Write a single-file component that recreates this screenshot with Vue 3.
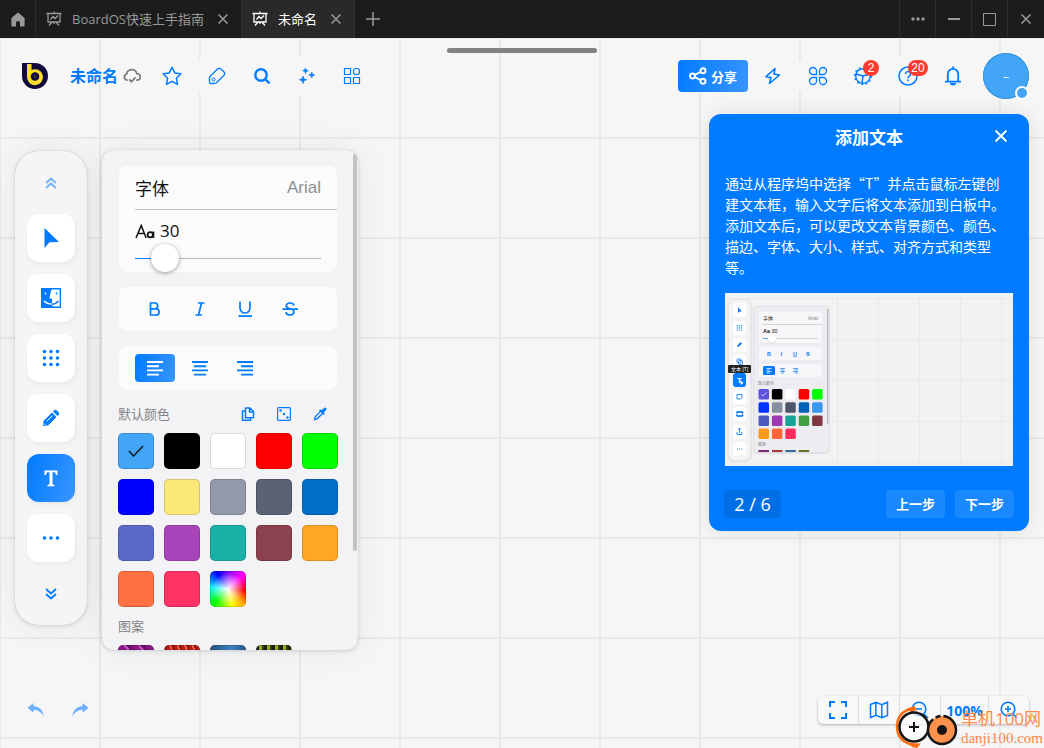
<script setup>
import { ref, computed } from 'vue'

const fontSize = ref(30)
const minSize = 12
const maxSize = 190
const fill = computed(() => ({
  '--fill': ((fontSize.value - minSize) / (maxSize - minSize)) * 100 + '%'
}))

const swatches = [
  '#42a5f5', '#000000', '#ffffff', '#ff0000', '#00ff00',
  '#0000ff', '#fae878', '#9299a9', '#5a6275', '#006dc6',
  '#5a6ac8', '#a845bb', '#1ab0a7', '#8c424e', '#ffa726',
  '#ff7043', '#ff3366'
]
const selected = ref(0)

const miniSwatches = [
  '#5e52dc', '#000', '#fff', '#f00', '#0f0',
  '#0033ff', '#868ea0', '#4d566b', '#0062b8', '#3b97ee',
  '#4c5bbf', '#9c38b2', '#18a598', '#43a047', '#7f3744',
  '#ff9a1c', '#ff6739', '#ff2c5c'
]
const miniY = [10, 28, 45, 62, 97, 114, 132, 149]
</script>

<template>
  <div class="app" lang="zh-CN">
    <header class="titlebar">
      <button class="home" aria-label="主页">
        <svg width="14" height="15" viewBox="0 0 14 15"><path fill="#999" d="M7 .5 13.600 6v7.500a1 1 0 0 1-1 1H9v-3.600a2 2 0 0 0-4 0v3.600H1.400a1 1 0 0 1-1-1V6z" /></svg>
      </button>
      <div class="tab">
        <svg class="board-icon" width="16" height="16" viewBox="0 0 16 16"><path d="M.5 2.500h15M2 2.500v8.500h12V2.500M8 .5v2M6 11l-3 3.500M10 11l3 3.500M8 11v2M4.500 8.500 7 5.500l2 2 3-3" /></svg>
        <span>BoardOS快速上手指南</span>
        <button class="tab-close" aria-label="关闭标签"><svg width="10" height="10" viewBox="0 0 10 10"><path d="m.5.5 9 9m0-9-9 9" /></svg></button>
      </div>
      <div class="tab active">
        <svg class="board-icon" width="16" height="16" viewBox="0 0 16 16"><path d="M.5 2.500h15M2 2.500v8.500h12V2.500M8 .5v2M6 11l-3 3.500M10 11l3 3.500M8 11v2M4.500 8.500 7 5.500l2 2 3-3" /></svg>
        <span>未命名</span>
        <button class="tab-close" aria-label="关闭标签"><svg width="10" height="10" viewBox="0 0 10 10"><path d="m.5.5 9 9m0-9-9 9" /></svg></button>
      </div>
      <button class="new-tab" aria-label="新建标签"><svg width="14" height="14" viewBox="0 0 14 14"><path d="M7 0v14M0 7h14" /></svg></button>
      <div class="win">
        <button aria-label="更多"><svg width="14" height="4" viewBox="0 0 14 4"><g fill="#999"><circle cx="2" cy="2" r="1.700" /><circle cx="7" cy="2" r="1.700" /><circle cx="12" cy="2" r="1.700" /></g></svg></button>
        <button aria-label="最小化"><svg width="12" height="2" viewBox="0 0 12 2"><path fill="#999" d="M0 0h12v2H0z" /></svg></button>
        <button aria-label="最大化"><svg width="13" height="13" viewBox="0 0 13 13"><path fill="none" stroke="#999" d="M.5.5h12v12H.5z" /></svg></button>
        <button aria-label="关闭"><svg width="10" height="10" viewBox="0 0 10 10"><path fill="none" stroke="#999" stroke-width="1.500" d="m.5.500 9 9m0-9-9 9" /></svg></button>
      </div>
    </header>

    <main class="board">
      <div class="handle"></div>

      <div class="toolbar">
        <svg class="logo" width="26" height="26" viewBox="0 0 26 26">
          <path fill="#120a3c" d="M0 0h13a13 13 0 1 1-13 13z" />
          <path fill="#ffdd2d" d="M5 1h4.500v6A8 8 0 1 1 5 14z" />
          <circle cx="13" cy="13.500" r="4.300" fill="#120a3c" /><circle cx="13" cy="13.500" r="1.200" fill="#ffdd2d" opacity=".25" />
        </svg>
        <h1>未命名</h1>
        <svg class="cloud" width="18" height="16" viewBox="0 0 18 16"><path fill="none" stroke="#7c7c7c" stroke-width="1.800" d="M4.700 12.200H4A3.200 3.200 0 0 1 3.600 6 5.200 5.200 0 0 1 13.800 5.600a3.300 3.300 0 0 1 .4 6.600h-1M6.200 11.300l2.300 2.300 4-4.300" /></svg>
        <nav class="tools">
          <button aria-label="收藏"><svg width="20" height="20" viewBox="0 0 20 20"><path stroke-width="1.500" stroke-linejoin="round" d="m10 1.200 2.700 5.700 6.200.9-4.500 4.400 1.100 6.200-5.500-3-5.500 3 1.100-6.200L1.100 7.800l6.200-.9z" /></svg></button>
          <button aria-label="标签"><svg width="18" height="18" viewBox="0 0 18 18"><path stroke-width="1.300" stroke-linejoin="round" d="M1.500 10 9.500 2Q11 .8 12.700 1.800l3.300 3.200q1.300 1.500.2 3L8.500 15.800Q7.500 16.500 6 16.500H3Q1.500 16.500 1.500 15z" /><circle cx="5.500" cy="12.500" r="1.500" /></svg></button>
          <button aria-label="搜索"><svg width="18" height="18" viewBox="0 0 18 18"><circle cx="8" cy="8" r="5.700" stroke-width="2.400" /><path stroke-width="2.400" d="m12 12 4.500 4.300" /></svg></button>
          <button aria-label="智能工具"><svg width="16" height="16" viewBox="0 0 16 16"><path fill="#007bff" stroke="#007bff" stroke-width=".6" stroke-linejoin="round" d="M6.500 0 7.300 2 9.300 2.800 7.300 3.600 6.500 5.600 5.700 3.600 3.700 2.800 5.700 2zM12.800 4 13.600 6.200 15.800 7 13.600 7.800 12.800 10 12 7.800 9.800 7 12 6.200zM4 8 5 10.800 7.800 11.800 5 12.800 4 15.600 3 12.800.2 11.800 3 10.800z" /></svg></button>
          <button aria-label="组件"><svg width="18" height="18" viewBox="0 0 18 18"><path d="M1.500 1.500h6v6h-6zM1.500 10.500h6v6h-6zM10.500 10.500h6v6h-6z" stroke-width="1.200" /><rect x="10.500" y="1.500" width="6" height="6" rx="2.500" stroke-width="1.200" /></svg></button>
        </nav>
        <button class="share"><svg width="18" height="18" viewBox="0 0 18 18"><g fill="none" stroke="#fff" stroke-width="1.900"><circle cx="3.500" cy="9" r="2.500" /><circle cx="14" cy="3.700" r="2.500" /><circle cx="14" cy="14.300" r="2.500" /><path d="M5.800 7.900 11.700 4.900M5.800 10.100l5.900 3" /></g></svg>分享</button>
        <nav class="tools">
          <button aria-label="快捷"><svg width="18" height="18" viewBox="0 0 18 18"><path stroke-width="1.600" stroke-linejoin="round" d="M11 1.500 2 9.600l5 1L5.500 16.500 15.500 8 10 7z" /></svg></button>
          <button aria-label="应用"><svg width="20" height="20" viewBox="0 0 20 20"><path stroke-width="1.300" d="M8.500 8.500H5A3.500 3.500 0 1 1 8.500 5zM11.500 8.500H15A3.500 3.500 0 1 0 11.500 5zM8.500 11.500H5A3.500 3.500 0 1 0 8.500 15zM11.500 11.500H15A3.500 3.500 0 1 1 11.500 15z" /></svg></button>
          <button aria-label="设置"><svg width="20" height="20" viewBox="0 0 20 20"><circle cx="10" cy="10" r="7.300" stroke-width="1.500" /><circle cx="10" cy="10" r="8.500" stroke-width="1.500" stroke-dasharray="1.600 2.850" /><path stroke-width="1.500" d="m10 10-7-2M10 10l7-2M10 10l-1 7" /></svg><b class="badge">2</b></button>
          <button aria-label="帮助"><svg width="20" height="20" viewBox="0 0 20 20"><circle cx="10" cy="10" r="9" stroke-width="1.500" /><path stroke-width="1.500" d="M7.500 8a2.500 2.500 0 1 1 3.800 2.100Q10 10.900 10 12.200M10 13.500v1.700" /></svg><b class="badge wide">20</b></button>
          <button aria-label="通知"><svg width="18" height="20" viewBox="0 0 18 20"><path stroke-width="1.800" d="M3.800 15.500V8a5.200 5.200 0 0 1 10.400 0v7.500M1 15.700h16M9 .5V3" /><path fill="#007bff" stroke="none" d="M6 17h6a3 2.500 0 0 1-6 0z" /></svg></button>
        </nav>
        <button class="avatar" aria-label="账户">–<i></i></button>
      </div>

      <div class="workspace">
        <aside class="dock">
          <button class="scroll dim" aria-label="向上"><svg width="12" height="12" viewBox="0 0 12 12"><path d="m1 6 5-4.500L11 6M1 11l5-4.500 5 4.500" /></svg></button>
          <div class="dock-items">
            <button aria-label="选择"><svg width="16" height="22" viewBox="0 0 16 22"><path fill="#007bff" d="M1.500 1v20l5-5.700L16 15z" /></svg></button>
            <button aria-label="访达"><svg width="20" height="20" viewBox="0 0 20 20"><path fill="#fff" stroke="#007bff" stroke-width="1.400" d="M.7.700h18.600v18.600H.7z" /><path fill="#007bff" d="M0 0h11Q9 5 8.500 10.500H11Q10.800 16 12 20H0z" /><path fill="none" stroke="#fff" stroke-width="1.300" d="M4.500 4.500v2M3 13q3 3 8 3.200" /><path fill="none" stroke="#007bff" stroke-width="1.300" d="M15.500 4.500v2M11 16.200q4-.2 6.500-3.200" /></svg></button>
            <button aria-label="网格"><svg width="18" height="18" viewBox="0 0 18 18"><g fill="#007bff"><template v-for="r in 3" :key="r"><circle v-for="c in 3" :key="c" :cx="c * 6.500 - 4" :cy="r * 6.500 - 4" r="1.800" /></template></g></svg></button>
            <button aria-label="画笔"><svg width="18" height="18" viewBox="0 0 18 18"><path fill="#007bff" d="m1 17 .5-5L10 3.500 14.500 8 6 16.500zM11 2.500l1.200-1.200q1.300-1 2.600.1l2 2q1 1.300 0 2.400L15.500 7z" /><path stroke="#fff" d="m4.500 12.500 6-6M2 14.500 3.500 16" /></svg></button>
            <button class="on" aria-label="文本"><svg width="14" height="17" viewBox="0 0 14 17"><path fill="#fff" d="M.5.500h13V5H12l-.8-2.700H8.500v11.900l2 .8v1.300h-7V15l2-.8V2.300H2.800L2 5H.5z" /></svg></button>
            <button aria-label="更多工具"><svg width="18" height="4" viewBox="0 0 18 4"><g fill="#007bff"><circle cx="2.500" cy="2" r="1.800" /><circle cx="9" cy="2" r="1.800" /><circle cx="15.500" cy="2" r="1.800" /></g></svg></button>
          </div>
          <button class="scroll" aria-label="向下"><svg width="12" height="12" viewBox="0 0 12 12"><path d="m1 1 5 4.500L11 1M1 6l5 4.500L11 6" /></svg></button>
        </aside>

        <section class="panel">
          <div class="card font-card">
            <div class="font-row"><span>字体</span><span class="font-name">Arial</span></div>
            <div class="size-box">
              <label for="size"><svg width="20" height="15" viewBox="0 0 20 15"><path fill="none" stroke="#111" stroke-width="1.500" d="M1 14 6.200 1.500 11.200 14M3 9.500h6.500" /><ellipse cx="15.300" cy="10.800" rx="2.700" ry="2.600" fill="none" stroke="#111" stroke-width="1.800" /><path stroke="#111" stroke-width="1.800" d="M18.400 7.500V14" /></svg>{{ fontSize }}</label>
              <input id="size" v-model.number="fontSize" type="range" :min="minSize" :max="maxSize" :style="fill" />
            </div>
          </div>
          <div class="card row">
            <button aria-label="粗体"><svg width="20" height="20" viewBox="0 0 20 20"><path stroke-width="1.700" d="M5.500 4h5a3 3 0 0 1 0 5.800h-5M5.500 3.200v12.800h5.500a3.100 3.100 0 0 0 0-6.200" /></svg></button>
            <button aria-label="斜体"><svg width="20" height="20" viewBox="0 0 20 20"><path stroke-width="1.700" d="M8 4h6.500M5.500 16H12M11.500 4 8.500 16" /></svg></button>
            <button aria-label="下划线"><svg width="20" height="20" viewBox="0 0 20 20"><path stroke-width="1.700" d="M5 2.500V9a5 5 0 0 0 10 0V2.500M3.500 17.200h13.500" /></svg></button>
            <button aria-label="删除线"><svg width="20" height="20" viewBox="0 0 20 20"><path stroke-width="1.700" d="M14 6.500Q13.500 4 10 4 6.500 4 6.200 6.800 6.200 8.800 10 9.800 14 10.800 14 13.200 13.500 16 10 16 6.500 16 5.800 13.200M2.500 10.200h15.500" /></svg></button>
          </div>
          <div class="card row">
            <button class="on" aria-label="左对齐"><svg width="16" height="16" viewBox="0 0 16 16"><path stroke-width="1.900" d="M0 2h16M0 6.200h12M0 10.400h16M0 14.600h12" /></svg></button>
            <button aria-label="居中"><svg width="16" height="16" viewBox="0 0 16 16"><path stroke-width="1.900" d="M0 2h16M2 6.200h12M0 10.400h16M2 14.600h12" /></svg></button>
            <button aria-label="右对齐"><svg width="16" height="16" viewBox="0 0 16 16"><path stroke-width="1.900" d="M0 2h16M4 6.200h12M0 10.400h16M4 14.600h12" /></svg></button>
          </div>
          <div class="section-head">
            <h2>默认颜色</h2>
            <button aria-label="复制"><svg width="14" height="14" viewBox="0 0 14 14"><path stroke-width="1.500" stroke-linejoin="round" d="M4.500 1h4.500L12.500 4.500v6.300h-8zM8.500 1v4h4M4.500 4H1.500v9.300H9.500v-2.500" /></svg></button>
            <button aria-label="随机"><svg width="14" height="14" viewBox="0 0 14 14"><rect x=".6" y=".6" width="12.800" height="12.800" rx="1" stroke-width="1.200" /><g fill="#007bff" stroke="none"><circle cx="3.500" cy="3.500" r="1.200" /><circle cx="7" cy="7" r="1.200" /><circle cx="10.500" cy="10.500" r="1.200" /></g></svg></button>
            <button aria-label="吸管"><svg width="14" height="14" viewBox="0 0 14 14"><path stroke-width="1.300" d="M7.500 4.500 2.200 9.800 1.500 12.500 4.200 11.800 9.500 6.500" /><path fill="#007bff" stroke="none" d="M6 3.500l1.200-1.200 1.300 1L11 1q1.200-.9 2.100 0 .9 1 0 2.100L10.800 5.500l1 1.300-1.200 1.200z" /></svg></button>
          </div>
          <div class="swatches">
            <button v-for="(c, i) in swatches" :key="c" class="swatch" :style="{ background: c }" :aria-label="c" @click="selected = i">
              <svg v-if="selected === i" width="16" height="12" viewBox="0 0 16 12"><path fill="none" stroke="#101820" stroke-width="1.500" d="m1 6 4.500 5L15 1" /></svg>
            </button>
            <button class="swatch rainbow" aria-label="自定义颜色"></button>
          </div>
          <h2 class="pattern-title">图案</h2>
          <div class="swatches">
            <button class="swatch p1" aria-label="图案 1"></button>
            <button class="swatch p2" aria-label="图案 2"></button>
            <button class="swatch p3" aria-label="图案 3"></button>
            <button class="swatch p4" aria-label="图案 4"></button>
          </div>
          <div class="thumb"></div>
        </section>

        <article class="tour">
          <div class="tour-head">
            <h2>添加文本</h2>
            <button aria-label="关闭教程"><svg width="14" height="14" viewBox="0 0 14 14"><path stroke="#fff" stroke-width="1.800" d="m1.500 1.500 11 11m0-11-11 11" /></svg></button>
          </div>
          <p>通过从程序坞中选择“T”并点击鼠标左键创建文本框，输入文字后将文本添加到白板中。添加文本后，可以更改文本背景颜色、颜色、描边、字体、大小、样式、对齐方式和类型等。</p>
          <svg class="preview" viewBox="0 0 288 173">
            <path fill="#f2f2f3" d="M0 0h288v173H0z" />
            <path stroke="#e9e9ec" d="M112.500 0v173M153.500 0v173M194.500 0v173M235.500 0v173M276.500 0v173M0 5.500h288M0 46.500h288M0 87.500h288M0 128.500h288M0 169.500h288" />
            <rect x="2" y="6" width="25" height="163" rx="7" fill="#dcdde2" opacity=".6" />
            <rect x="4" y="7" width="21" height="160" rx="6" fill="#f4f4f5" />
            <rect x="28" y="13" width="77" height="148" rx="5" fill="#d7d8de" opacity=".7" />
            <rect x="29" y="14" width="75" height="145" rx="4" fill="#ededf1" />
            <path stroke="#b5b5b9" stroke-width="1.300" d="M102.700 16v115" />
            <rect v-for="y in miniY" :key="y" x="8" :y="y" width="13" height="14" rx="3" fill="#fff" />
            <rect x="8" y="80" width="13" height="14" rx="3" fill="#007bff" />
            <g fill="#147cf5">
              <path d="M13 14v6l1.500-1.500H17z" />
              <g v-for="r in 3" :key="r"><circle v-for="c in 3" :key="c" :cx="10 + c * 2.200" :cy="30.500 + r * 2.200" r=".7" /></g>
              <path d="m12 54 .6-2 3-3 1.400 1.400-3 3z" />
            </g>
            <g fill="none" stroke="#147cf5" stroke-width=".9">
              <rect x="12" y="66" width="4" height="4" rx="1" /><rect x="13.500" y="67.500" width="4" height="4" rx="1" />
              <path d="M12 101.500h5v3L15.500 106H12zM12 118.500h5.500v5H12zM11 119.500h7.500M11 122.500h7.500M12 139v2.500h5V139M14.500 140v-5l-1.500 1.500M14.500 135l1.500 1.500" />
              <path stroke-dasharray="1 1.200" stroke-width="1.200" d="M12 156h6" />
            </g>
            <text x="12" y="90" font-size="8" font-weight="700" fill="#fff">T</text>
            <path fill="#fff" d="m15 87 1 5 1-1 1.500-1z" />
            <rect x="3" y="72" width="23" height="8" rx="1" fill="#222" />
            <text x="6" y="78" font-size="5" fill="#fff">文本 [T]</text>
            <g fill="#f7f7f9">
              <rect x="34" y="19" width="63" height="31" rx="2.500" /><rect x="34" y="54" width="63" height="13" rx="2.500" /><rect x="34" y="71" width="63" height="13" rx="2.500" />
            </g>
            <text x="38" y="27" font-size="5" fill="#222">字体</text>
            <text x="83" y="27" font-size="5" fill="#888">Arial</text>
            <path stroke="#bcbcc0" stroke-width=".6" d="M38 31.500h59M46 45.500h47" />
            <text x="38" y="40" font-size="5.500" fill="#222"><tspan font-weight="700">Aa</tspan> 30</text>
            <path stroke="#007bff" stroke-width=".7" d="M38 45.500h8" />
            <circle cx="47" cy="46" r="4.500" fill="#d9d9dd" /><circle cx="47" cy="45.500" r="4" fill="#fff" />
            <g font-size="5.500" font-weight="700" fill="#147cf5"><text x="42" y="62.500">B</text><text x="55.500" y="62.500" font-style="italic">I</text><text x="68" y="62.500" text-decoration="underline">U</text><text x="81" y="62.500" text-decoration="line-through">S</text></g>
            <rect x="38" y="73" width="12" height="9" rx="1.500" fill="#007bff" />
            <path stroke="#fff" stroke-width=".7" d="M41.500 75.500h5M41.500 77h3.500M41.500 78.500h5M41.500 80h3.500" />
            <path stroke="#147cf5" stroke-width=".7" d="M55 75.500h5M56 77h3M55 78.500h5M56 80h3M68 75.500h5M69.500 77H73M68 78.500h5M69.500 80H73" />
            <text x="33" y="92" font-size="4" fill="#888">默认颜色</text>
            <rect v-for="(c, i) in miniSwatches" :key="i" :x="33.500 + (i % 5) * 13.400" :y="96 + Math.floor(i / 5) * 13.200" width="10.500" height="10.500" rx="1.500" :fill="c" />
            <path fill="none" stroke="#fff" stroke-width=".7" d="m36.500 101.500 1.500 1.500 3.500-3.500" />
            <text x="33" y="153" font-size="4" fill="#888">图案</text>
            <path fill="#7d286f" d="M33.500 157H44v2H33.500z" /><path fill="#a73835" d="M47 157h10.500v2H47z" /><path fill="#356a91" d="M60.300 157h10.500v2H60.300z" /><path fill="#696d26" d="M73.700 157h10.500v2H73.700z" />
          </svg>
          <div class="tour-foot">
            <span class="count">2 / 6</span>
            <button>上一步</button>
            <button>下一步</button>
          </div>
        </article>
      </div>

      <footer class="bottom">
        <button class="history" aria-label="撤销"><svg width="18" height="16" viewBox="0 0 18 16"><path fill="#6cb0ff" d="M.5 5.800 6.500 1v3q9 .5 10.500 11Q13.500 8 6.500 7.800v3z" /></svg></button>
        <button class="history" aria-label="重做"><svg width="18" height="16" viewBox="0 0 18 16"><path fill="#6cb0ff" d="M17.500 5.800 11.500 1v3Q2.500 4.500 1 15 4.500 8 11.500 7.800v3z" /></svg></button>
        <div class="zoom">
          <button aria-label="全屏"><svg width="18" height="18" viewBox="0 0 18 18"><path stroke-width="2" d="M1 6V1h5M12 1h5v5M17 12v5h-5M6 17H1v-5" /></svg></button>
          <button aria-label="地图"><svg width="20" height="18" viewBox="0 0 20 18"><path stroke-width="1.500" d="M1.500 3.500 6.800 1.200l6 2.400 5.700-2.400v13.300l-5.700 2.300-6-2.400-5.300 2.200zM6.800 1.200v13.200M12.800 3.600v13.200" /></svg></button>
          <button aria-label="缩小"><svg width="18" height="18" viewBox="0 0 18 18"><circle cx="8" cy="8" r="6.800" stroke-width="1.600" /><path stroke-width="1.600" d="m13 13 4 4M5 8h6" /></svg></button>
          <button class="percent">100%</button>
          <button aria-label="放大"><svg width="18" height="18" viewBox="0 0 18 18"><circle cx="8" cy="8" r="6.800" stroke-width="1.600" /><path stroke-width="1.600" d="m13 13 4 4M5 8h6M8 5v6" /></svg></button>
        </div>
      </footer>

      <div class="mark">
        <svg width="66" height="42" viewBox="0 0 66 42">
          <path fill="none" stroke="#ff6b10" stroke-width="2.500" d="M20 2.500Q2.500 4 2 20.500 2 36 20 39.500" />
          <path fill="#ff6b10" d="m11 3 8-3 3 4-6 2zM14 37l12 .5-4 4.500-5-1z" />
          <circle cx="19" cy="21" r="14.500" fill="#fff" fill-opacity=".7" stroke="#161616" stroke-width="2.500" />
          <path stroke="#161616" stroke-width="2" d="M19 16v10M14 21h10" />
          <circle cx="47" cy="24" r="14" fill="#ff914d" stroke="#161616" stroke-width="2.500" stroke-dasharray="56 3 5 3 100" />
          <circle cx="47" cy="24" r="5" fill="#161616" />
        </svg>
        <div><strong>单机100网</strong><span>danji100.com</span></div>
      </div>
    </main>
  </div>
</template>

<style>
body { margin: 0; }
</style>

<style scoped>
.app {
  min-height: 100vh;
  display: flex;
  flex-direction: column;
  font-family: "Open Sans", "Noto Sans CJK SC", sans-serif;
  font-size: 13px;
  color: #111;
}
button {
  border: 0;
  padding: 0;
  margin: 0;
  background: none;
  font: inherit;
  color: inherit;
  display: flex;
  align-items: center;
  justify-content: center;
}
h1, h2, p { margin: 0; }
svg { display: block; flex: none; }

.titlebar { display: flex; height: 38px; background: #1c1c1c; color: #999; }
.titlebar path { fill-rule: evenodd; }
.home { width: 36px; border-right: 1px solid #2c2c2c; }
.tab { display: flex; align-items: center; padding: 0 13px 0 10px; border-right: 1px solid #303030; }
.tab span { margin: 0 14px 0 10px; white-space: nowrap; line-height: 20px; }
.tab.active { background: #292929; color: #fff; }
.board-icon path { fill: none; stroke: currentColor; stroke-width: 1.300; }
.tab-close path, .new-tab path { fill: none; stroke: #999; stroke-width: 1.500; }
.new-tab { width: 36px; }
.win { display: flex; margin-left: auto; padding-right: 1px; }
.win button { width: 36px; border-left: 1px solid #2c2c2c; box-sizing: border-box; }

.board {
  position: relative;
  flex: 1;
  display: flex;
  flex-direction: column;
  background-color: #f6f6f6;
  background-image: linear-gradient(#e9e9e9 2px, transparent 2px), linear-gradient(90deg, #e9e9e9 2px, transparent 2px);
  background-size: 100px 100px;
  background-position: -1px -1px;
  overflow: hidden;
}
.handle { position: absolute; top: 10px; left: 50%; width: 150px; height: 5px; margin-left: -75px; border-radius: 3px; background: #838383; }

.toolbar { display: flex; align-items: center; height: 76px; padding: 0 15px 0 22px; }
h1 { margin-left: 22px; font-size: 16px; line-height: 24px; color: #007bff; white-space: nowrap; }
.cloud { margin: 0 11px 0 5px; }
.tools { display: flex; gap: 5px; }
.tools button { position: relative; width: 40px; height: 40px; border-radius: 10px; background: #f6f6f6; }
.tools svg { fill: none; stroke: #007bff; }
.badge { position: absolute; left: 20px; top: 4px; min-width: 16px; height: 16px; border-radius: 8px; background: #ff3b30; color: #fff; font: 12px/16px "Liberation Sans", sans-serif; text-align: center; }
.badge.wide { min-width: 20px; }
.share { width: 70px; height: 32px; gap: 4px; margin: 0 5px 0 auto; border-radius: 4px; background: linear-gradient(105deg, #007bff, #3995ff); color: #fff; font-size: 13px; font-weight: 700; }
.avatar { position: relative; width: 46px; height: 46px; margin-left: 10px; border-radius: 50%; background: #42a5f5; box-shadow: inset 0 0 0 1px #3b93db; color: #fff; font-size: 12px; }
.avatar i { position: absolute; right: 0; bottom: -1px; width: 10px; height: 10px; border: 2px solid #fff; border-radius: 50%; background: #42a5f5; }

.workspace { display: flex; align-items: flex-start; padding: 0 15px; }
.dock { width: 72px; flex: none; margin-top: 37px; border-radius: 24px; background: #f5f5f5; box-shadow: 0 0 1px #a8adb3, 0 1px 4px rgba(60, 70, 90, .16), 0 0 32px rgba(80, 95, 110, .1); }
.scroll { width: 100%; height: 63px; }
.scroll path { fill: none; stroke: #007bff; stroke-width: 1.800; }
.dim { opacity: .55; }
.dock-items { display: flex; flex-direction: column; align-items: center; gap: 12px; }
.dock-items button { width: 48px; height: 48px; border-radius: 12px; background: #fff; box-shadow: 1px 2px 5px rgba(0, 0, 0, .06); }
.dock-items .on { background: linear-gradient(105deg, #007bff, #3995ff); }

.panel { position: relative; flex: none; box-sizing: border-box; width: 256px; height: 500px; margin: 36px 0 0 15px; padding: 16px 20px 0 16px; border-radius: 12px; overflow: hidden; background: #f3f3f6; box-shadow: 0 0 1px #a8adb3, 0 1px 4px rgba(60, 70, 90, .16), 0 0 32px rgba(80, 95, 110, .1); }
.thumb { position: absolute; top: 4px; right: 1px; width: 4px; height: 397px; border-radius: 2px; background: #c2c2c2; }
.card { margin: 0 1px 15px; border-radius: 8px; background: #fbfbfb; }
.font-card { height: 106px; }
.font-row { display: flex; justify-content: space-between; align-items: center; height: 43px; margin-left: 16px; padding-right: 16px; border-bottom: 1px solid #c4c4c4; font-size: 17px; }
.font-name { font: 17px/20px "Liberation Sans", sans-serif; color: #8f8f8f; }
.size-box { padding: 10px 16px 0; }
.size-box label { display: flex; align-items: center; gap: 5px; height: 24px; font-size: 17px; line-height: 22px; padding-bottom: 2px; box-sizing: border-box; }
.size-box input { -webkit-appearance: none; appearance: none; display: block; width: 100%; height: 28px; margin: 0; background: linear-gradient(90deg, #007bff var(--fill), #b9b9b9 var(--fill)) center / 100% 1px no-repeat; }
.size-box input::-webkit-slider-thumb { -webkit-appearance: none; width: 28px; height: 28px; border-radius: 50%; background: #fff; box-shadow: 0 1px 4px rgba(0, 0, 0, .38); }
.row { display: flex; align-items: center; gap: 5px; height: 44px; padding-left: 16px; }
.row button { width: 40px; height: 28px; border-radius: 4px; }
.row svg { fill: none; stroke: #007bff; }
.row .on { background: linear-gradient(105deg, #007bff, #3995ff); }
.row .on svg { stroke: #fff; }
.panel h2 { font-size: 13px; font-weight: 400; line-height: 18px; color: #858588; }
.section-head { display: flex; align-items: center; height: 18px; margin-bottom: 10px; }
.section-head h2 { margin-right: auto; }
.section-head button { width: 36px; height: 18px; }
.section-head svg { fill: none; stroke: #007bff; }
.swatches { display: grid; grid-template-columns: repeat(5, 36px); gap: 10px; }
.swatch { height: 36px; border-radius: 5px; box-shadow: inset 0 0 0 1px rgba(0, 0, 0, .15); }
.rainbow { background: radial-gradient(circle, #fff, rgba(255, 255, 255, 0) 65%), conic-gradient(#8000ff, #f0f 45deg, #f00 95deg, #ffb000 135deg, #ff0 165deg, #0f0 225deg, #0ff 275deg, #00f 325deg, #8000ff); }
.section-head + .swatches { margin-bottom: 10px; }
.pattern-title { margin-bottom: 10px; }
.p1 { background: repeating-linear-gradient(50deg, #8b1787 0 5px, #b85ab5 5px 7px, #6d116b 7px 11px); }
.p2 { background: repeating-linear-gradient(70deg, #b81d18 0 3px, #f05a45 3px 5px, #8d1712 5px 7px); }
.p3 { background: linear-gradient(90deg, #234f78, #3c80c4 60%, #28567f); }
.p4 { background: repeating-linear-gradient(90deg, #1c2000 0 3px, #9ba61c 3px 6px, #333908 6px 8px); }

.tour { flex: none; box-sizing: border-box; width: 320px; margin-left: auto; padding: 0 16px 13px; border-radius: 12px; background: #007bff; color: #fff; box-shadow: 0 0 20px rgba(0, 0, 0, .1); font-family: "Noto Sans CJK SC", sans-serif; }
.tour-head { position: relative; display: flex; align-items: center; justify-content: center; height: 45px; margin-bottom: 14px; }
.tour-head h2 { font-size: 17px; line-height: 24px; }
.tour-head button { position: absolute; right: 0; top: 10px; width: 24px; height: 24px; }
.tour p { font-size: 14px; line-height: 21px; }
.preview { width: 100%; margin: 15px 0 24px; font-family: "Liberation Sans", "Noto Sans CJK SC", sans-serif; }
.tour-foot { display: flex; gap: 10px; margin: 0 -1px; }
.count { margin-right: auto; width: 57px; line-height: 28px; border-radius: 4px; background: #006fe6; text-align: center; font-family: "Open Sans", sans-serif; font-size: 18px; }
.tour-foot button { box-sizing: border-box; width: 59px; height: 28px; padding-bottom: 2px; border-radius: 4px; background: #1a88ff; font-size: 13px; font-weight: 700; }

.bottom { display: flex; align-items: center; margin-top: auto; padding: 16px 15px 24px 14px; }
.history { width: 44px; height: 28px; }
.zoom { display: flex; margin-left: auto; border-radius: 5px; background: #f8f8f8; box-shadow: 0 1px 3px rgba(0, 0, 0, .28); }
.zoom button { box-sizing: content-box; width: 40px; height: 28px; }
.zoom button + button { border-left: 1px solid #dedede; }
.zoom svg { fill: none; stroke: #007bff; }
.zoom .percent { width: 47px; color: #007bff; font-size: 14px; font-weight: 700; }

.mark { position: absolute; right: 1px; bottom: 0; display: flex; align-items: flex-end; pointer-events: none; color: #ff8a48; }
.mark div { display: flex; flex-direction: column; white-space: nowrap; }
.mark strong { font-size: 17px; font-weight: 400; line-height: 18px; }
.mark span { font: 15px/20px "Liberation Serif", serif; }
</style>
